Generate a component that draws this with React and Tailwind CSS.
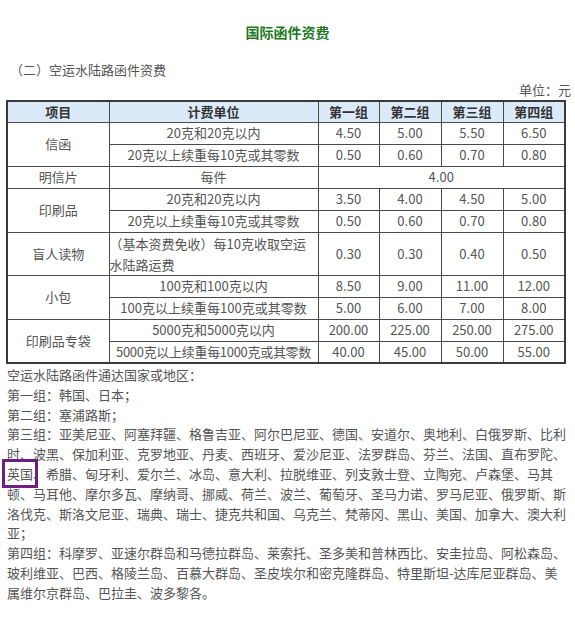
const rows = [
  { item: '信函', span: 2, unit: '20克和20克以内', v: ['4.50', '5.00', '5.50', '6.50'] },
  { unit: '20克以上续重每10克或其零数', v: ['0.50', '0.60', '0.70', '0.80'] },
  { item: '明信片', span: 1, unit: '每件', all: '4.00' },
  { item: '印刷品', span: 2, unit: '20克和20克以内', v: ['3.50', '4.00', '4.50', '5.00'] },
  { unit: '20克以上续重每10克或其零数', v: ['0.50', '0.60', '0.70', '0.80'] },
  { item: '盲人读物', span: 1, blind: true, v: ['0.30', '0.30', '0.40', '0.50'] },
  { item: '小包', span: 2, unit: '100克和100克以内', v: ['8.50', '9.00', '11.00', '12.00'] },
  { unit: '100克以上续重每100克或其零数', v: ['5.00', '6.00', '7.00', '8.00'] },
  { item: '印刷品专袋', span: 2, unit: '5000克和5000克以内', v: ['200.00', '225.00', '250.00', '275.00'] },
  { unit: '5000克以上续重每1000克或其零数', v: ['40.00', '45.00', '50.00', '55.00'], tight: true },
];

const lines = [
  '空运水陆路函件通达国家或地区：',
  '第一组：韩国、日本；',
  '第二组：塞浦路斯；',
  '第三组：亚美尼亚、阿塞拜疆、格鲁吉亚、阿尔巴尼亚、德国、安道尔、奥地利、白俄罗斯、比利',
  '时、波黑、保加利亚、克罗地亚、丹麦、西班牙、爱沙尼亚、法罗群岛、芬兰、法国、直布罗陀、',
  null,
  '顿、马耳他、摩尔多瓦、摩纳哥、挪威、荷兰、波兰、葡萄牙、圣马力诺、罗马尼亚、俄罗斯、斯',
  '洛伐克、斯洛文尼亚、瑞典、瑞士、捷克共和国、乌克兰、梵蒂冈、黑山、美国、加拿大、澳大利',
  '亚；',
  '第四组：科摩罗、亚速尔群岛和马德拉群岛、莱索托、圣多美和普林西比、安圭拉岛、阿松森岛、',
  '玻利维亚、巴西、格陵兰岛、百慕大群岛、圣皮埃尔和密克隆群岛、特里斯坦-达库尼亚群岛、美',
  '属维尔京群岛、巴拉圭、波多黎各。',
];

const cell = 'border border-[#4a4a4a] p-0 text-center';

export default function App() {
  return (
    <div
      className="w-[575px] h-[618px] overflow-hidden bg-white text-[13px] text-[#555]"
      style={{ fontFamily: '"Noto Sans CJK SC", "Noto Sans", sans-serif' }}
    >
      <div className="px-[6px] pt-[22px]">
        <h1 className="text-center text-[14px] leading-[20px] font-bold text-[#1e7a1e]">国际函件资费</h1>
        <p className="mt-[18px] leading-[20px] pl-[4px]">（二）空运水陆路函件资费</p>
        <p className="leading-[20px] text-right pr-[4px] -mr-[6px]">单位：元</p>

        <table className="mt-0 w-[558px] table-fixed border-collapse border-2 border-[#3a3a3a]">
          <colgroup>
            <col className="w-[102px]" />
            <col className="w-[209px]" />
            <col className="w-[61px]" />
            <col className="w-[62px]" />
            <col className="w-[62px]" />
            <col className="w-[62px]" />
          </colgroup>
          <thead>
            <tr className="h-[21px] bg-[#dbeaf9] text-[#333] font-bold">
              <th className={cell}>项目</th>
              <th className={cell}>计费单位</th>
              <th className={cell}>第一组</th>
              <th className={cell}>第二组</th>
              <th className={cell}>第三组</th>
              <th className={cell}>第四组</th>
            </tr>
          </thead>
          <tbody>
            {rows.map((r, i) => (
              <tr key={i} className={r.blind ? 'h-[42px]' : 'h-[22px]'}>
                {r.item && (
                  <td rowSpan={r.span} className={cell}>{r.item}</td>
                )}
                {r.blind ? (
                  <td className={`${cell} text-left leading-[21px]`}>
                    （基本资费免收）每10克收取空运<br />水陆路运费
                  </td>
                ) : (
                  <td className={`${cell} whitespace-nowrap ${r.tight ? 'tracking-[-0.3px]' : ''}`}>{r.unit}</td>
                )}
                {r.all ? (
                  <td colSpan={4} className={cell}>{r.all}</td>
                ) : (
                  r.v.map((v, j) => (
                    <td key={j} className={cell}>{v}</td>
                  ))
                )}
              </tr>
            ))}
          </tbody>
        </table>

        <div className="mt-[1px] pl-[1px] leading-[19.8px] whitespace-nowrap">
          {lines.map((l, i) =>
            l === null ? (
              <div key={i}>
                <span className="outline-[3px] outline-solid outline-[#6e1f84] outline-offset-[2px]">英国</span>
                、希腊、匈牙利、爱尔兰、冰岛、意大利、拉脱维亚、列支敦士登、立陶宛、卢森堡、马其
              </div>
            ) : (
              <div key={i}>{l}</div>
            )
          )}
        </div>
      </div>
    </div>
  );
}
